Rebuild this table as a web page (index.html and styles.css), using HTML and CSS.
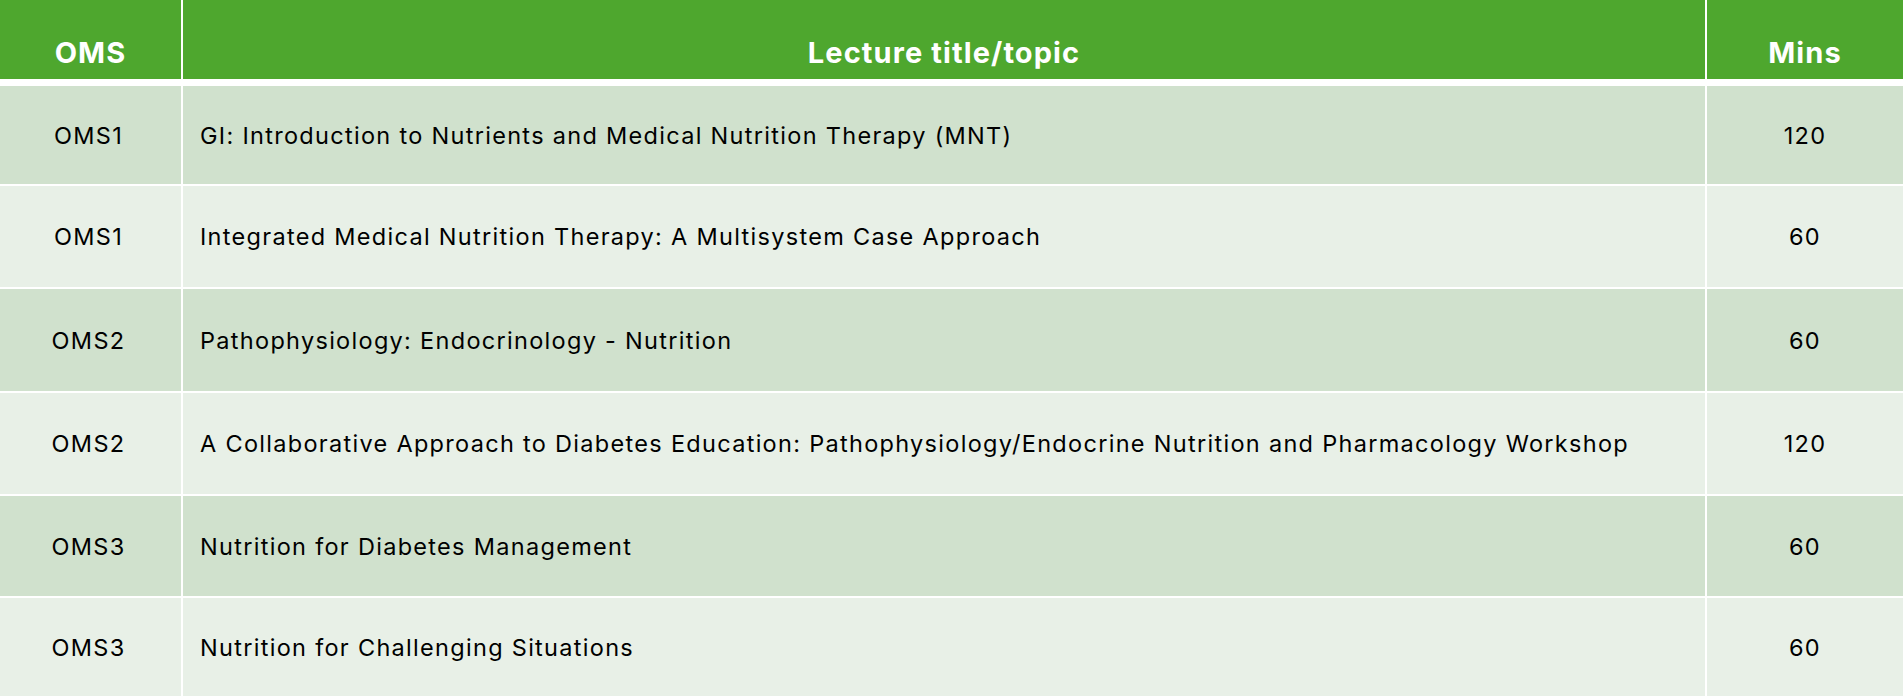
FILE: index.html
```html
<!DOCTYPE html>
<html lang="en">
<head>
<meta charset="utf-8">
<title>Nutrition lectures</title>
<link rel="stylesheet" href="styles.css">
</head>
<body>
<table class="lectures">
  <thead>
    <tr>
      <th class="col-oms">OMS</th>
      <th class="col-title">Lecture title/topic</th>
      <th class="col-mins">Mins</th>
    </tr>
  </thead>
  <tbody>
    <tr class="band-a r1">
      <td class="col-oms">OMS1</td>
      <td class="col-title">GI: Introduction to Nutrients and Medical Nutrition Therapy (MNT)</td>
      <td class="col-mins">120</td>
    </tr>
    <tr class="band-b r2">
      <td class="col-oms">OMS1</td>
      <td class="col-title">Integrated Medical Nutrition Therapy: A Multisystem Case Approach</td>
      <td class="col-mins">60</td>
    </tr>
    <tr class="band-a r3">
      <td class="col-oms">OMS2</td>
      <td class="col-title">Pathophysiology: Endocrinology - Nutrition</td>
      <td class="col-mins">60</td>
    </tr>
    <tr class="band-b r4">
      <td class="col-oms">OMS2</td>
      <td class="col-title">A Collaborative Approach to Diabetes Education: Pathophysiology/Endocrine Nutrition and Pharmacology Workshop</td>
      <td class="col-mins">120</td>
    </tr>
    <tr class="band-a r5">
      <td class="col-oms">OMS3</td>
      <td class="col-title">Nutrition for Diabetes Management</td>
      <td class="col-mins">60</td>
    </tr>
    <tr class="band-b r6">
      <td class="col-oms">OMS3</td>
      <td class="col-title">Nutrition for Challenging Situations</td>
      <td class="col-mins">60</td>
    </tr>
  </tbody>
</table>
</body>
</html>
```
FILE: styles.css
```css
html, body {
  margin: 0;
  padding: 0;
  background: #ffffff;
  overflow: hidden;
}
body {
  width: 1904px;
  height: 696px;
  font-family: Inter, "Open Sans", "Liberation Sans", sans-serif;
  color: #000000;
}
.lectures {
  border-collapse: separate;
  border-spacing: 0;
  table-layout: fixed;
  width: 1903px;
}
.lectures th,
.lectures td {
  padding: 0;
  border-right: 2px solid #ffffff;
  border-bottom: 2px solid #ffffff;
  box-sizing: border-box;
}
.lectures th:last-child,
.lectures td:last-child {
  border-right: none;
}
.lectures th {
  background: #4ea72e;
  color: #ffffff;
  font-weight: 700;
  font-size: 29px;
  letter-spacing: 1.1px;
  height: 86px;
  border-bottom-width: 7px;
  padding-top: 26px;
  text-align: center;
  vertical-align: middle;
}
.col-oms { width: 183px; }
.col-mins { width: 196px; }
.lectures td {
  font-size: 23.5px;
  letter-spacing: 1.3px;
  vertical-align: middle;
}
.lectures td.col-oms,
.lectures td.col-mins { text-align: center; }
.lectures td.col-oms { padding-right: 4px; }
.lectures td.col-title {
  text-align: left;
  padding-left: 17px;
}
.band-a td { background: #d0e1cd; }
.band-b td { background: #e8f0e7; }
.r1 td { height: 100px; }
.r2 td { height: 103px; }
.r3 td { height: 104px; }
.r4 td { height: 103px; }
.r5 td { height: 102px; }
.r6 td { height: 100px; }
```
